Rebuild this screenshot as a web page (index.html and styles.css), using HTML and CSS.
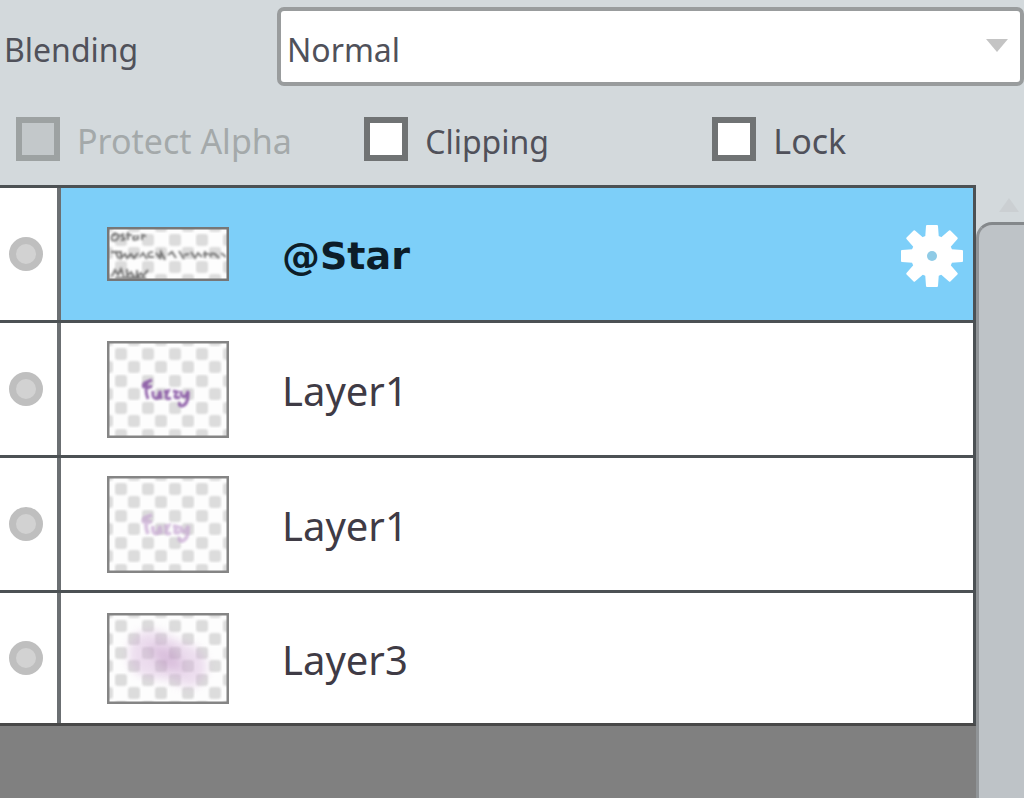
FILE: index.html
```html
<!DOCTYPE html>
<html lang="en">
<head>
<meta charset="utf-8">
<meta name="viewport" content="width=device-width, initial-scale=1">
<title>Layers</title>
<link rel="stylesheet" href="styles.css">
</head>
<body>
<svg class="defs" width="0" height="0" aria-hidden="true">
  <defs>
    <filter id="soft"><feGaussianBlur stdDeviation="1"/></filter>
    <filter id="cloud" x="-30%" y="-30%" width="160%" height="160%"><feGaussianBlur stdDeviation="5"/></filter>
    <pattern id="checker" width="27" height="27" patternUnits="userSpaceOnUse" x="7" y="6">
      <rect width="27" height="27" fill="#fdfdfd"/>
      <g fill="#dcdcdc" filter="url(#soft)">
        <rect x="1" y="1" width="12" height="12" rx="3"/>
        <rect x="14" y="14" width="12" height="12" rx="3"/>
      </g>
    </pattern>
  </defs>
</svg>
<main class="panel">
  <div class="blending">
    <label class="blending-label" for="mode">Blending</label>
    <div class="select-wrap">
      <select id="mode" class="select"><option>Normal</option></select>
      <svg class="select-arrow" viewBox="0 0 22 13" aria-hidden="true"><path d="M0 0H22L11 13Z" fill="#c4c4c4"/></svg>
    </div>
  </div>
  <div class="options">
    <label class="option option-wide option-off"><input class="box" type="checkbox" disabled><span class="option-text">Protect Alpha</span></label>
    <label class="option"><input class="box" type="checkbox"><span class="option-text">Clipping</span></label>
    <label class="option option-wide"><input class="box" type="checkbox"><span class="option-text">Lock</span></label>
  </div>
  <div class="body">
    <ul class="layers">
      <li class="layer">
        <button class="eye" aria-label="Toggle visibility"><span class="dot"></span></button>
        <div class="content selected">
          <svg class="thumb" viewBox="0 0 122 54" aria-hidden="true">
            <rect width="122" height="54" fill="url(#checker)"/>
            <g fill="none" stroke="#444" stroke-width="2" opacity=".7" filter="url(#soft)">
              <path d="M9 6Q3 8 5 13Q10 15 12 9Q10 5 6 9M17 7Q12 8 17 11Q19 13 14 13M21 5V13M19 8H25M29 9Q24 10 27 13L31 12V8M35 13V8L39 9"/>
              <path d="M4 25H13M8 24L12 32M14 24V31L18 27L20 31L24 27L27 31L31 26M33 30L36 26L40 32M46 25Q39 25 42 30L47 30M49 26L53 31L54 25L58 33M61 28L65 25L69 31M72 24L77 32M77 28L82 27M84 25L88 31L91 26L95 30M98 24V31M96 27H102M104 30Q102 25 108 27L112 31M114 26L119 30"/>
              <path d="M5 49L8 43L11 48L14 42L17 50M20 42V49L24 45L27 50M30 43V50L34 46L36 49L41 43M8 51H39"/>
            </g>
            <rect x="1" y="1" width="120" height="52" fill="none" stroke="#777" stroke-width="3"/>
          </svg>
          <span class="name name-bold">@Star</span>
          <button class="gear" aria-label="Layer settings">
            <svg class="gear-icon" viewBox="-31 -31 62 62" aria-hidden="true">
              <g fill="#fff" stroke="#fff" stroke-width="2" stroke-linejoin="round">
                <path id="tooth" d="M-5 -30H5L6 -16H-6Z"/>
                <use href="#tooth" transform="rotate(45)"/><use href="#tooth" transform="rotate(90)"/><use href="#tooth" transform="rotate(135)"/><use href="#tooth" transform="rotate(180)"/><use href="#tooth" transform="rotate(225)"/><use href="#tooth" transform="rotate(270)"/><use href="#tooth" transform="rotate(315)"/>
                <circle r="20"/>
              </g>
              <circle r="5" fill="#8fcbe6"/>
            </svg>
          </button>
        </div>
      </li>
      <li class="layer">
        <button class="eye" aria-label="Toggle visibility"><span class="dot"></span></button>
        <div class="content">
          <svg class="thumb" viewBox="0 0 122 97" aria-hidden="true">
            <rect width="122" height="97" fill="url(#checker)"/>
            <path d="M37 47Q35 42 40 41L45 39M41 40Q37 48 41 58M38 48L45 45M46 50Q45 59 51 57L53 50L54 58M57 51L61 50Q56 60 64 57M66 50L70 51Q65 59 73 56M74 50Q73 57 79 55L81 50Q82 63 75 65Q71 65 73 61" fill="none" stroke="#8551a2" stroke-width="3" opacity=".85" filter="url(#soft)"/>
            <rect x="1" y="1" width="120" height="95" fill="none" stroke="#858585" stroke-width="3"/>
          </svg>
          <span class="name">Layer1</span>
        </div>
      </li>
      <li class="layer">
        <button class="eye" aria-label="Toggle visibility"><span class="dot"></span></button>
        <div class="content">
          <svg class="thumb" viewBox="0 0 122 97" aria-hidden="true">
            <rect width="122" height="97" fill="url(#checker)"/>
            <path d="M37 47Q35 42 40 41L45 39M41 40Q37 48 41 58M38 48L45 45M46 50Q45 59 51 57L53 50L54 58M57 51L61 50Q56 60 64 57M66 50L70 51Q65 59 73 56M74 50Q73 57 79 55L81 50Q82 63 75 65Q71 65 73 61" fill="none" stroke="#c4a3d0" stroke-width="4" opacity=".65" filter="url(#soft)"/>
            <rect x="1" y="1" width="120" height="95" fill="none" stroke="#858585" stroke-width="3"/>
          </svg>
          <span class="name">Layer1</span>
        </div>
      </li>
      <li class="layer layer-last">
        <button class="eye" aria-label="Toggle visibility"><span class="dot"></span></button>
        <div class="content">
          <svg class="thumb" viewBox="0 0 122 91" aria-hidden="true">
            <rect width="122" height="91" fill="url(#checker)"/>
            <path d="M22 35Q24 16 50 18Q66 24 72 28Q96 34 98 46Q104 62 88 74Q72 74 60 66Q34 68 22 52Z" fill="#d3add8" opacity=".4" filter="url(#cloud)"/>
            <path d="M40 32L68 36L78 58L56 56Z" fill="#b080b5" opacity=".3" filter="url(#cloud)"/>
            <rect x="1" y="1" width="120" height="89" fill="none" stroke="#858585" stroke-width="3"/>
          </svg>
          <span class="name">Layer3</span>
        </div>
      </li>
    </ul>
    <div class="scroll">
      <svg class="scroll-up" viewBox="0 0 20 14" aria-hidden="true"><path d="M0 14L10 0L20 14Z" fill="#c8cccf"/></svg>
      <div class="scroll-thumb"></div>
    </div>
  </div>
</main>
</body>
</html>
```
FILE: styles.css
```css
* { box-sizing: border-box; }

body {
  margin: 0;
  background: #d3d9dc;
  color: #50515a;
  font-family: "Noto Sans", "Open Sans", sans-serif;
  font-size: 32px;
}

button { padding: 0; border: 0; background: none; }

.defs { position: absolute; }

.panel {
  display: flex;
  flex-direction: column;
  min-height: 100vh;
}

.blending {
  display: flex;
  align-items: center;
  padding: 7px 0 0 4px;
}

.blending-label { width: 273px; padding-top: 6px; }

.select-wrap {
  position: relative;
  flex: 1;
  height: 79px;
}

.select {
  width: 100%;
  height: 100%;
  padding: 6px 50px 0 6px;
  appearance: none;
  border: 4px solid #999c9d;
  border-radius: 7px;
  background: #fff;
  color: #50515a;
  font: inherit;
}

.select-arrow {
  position: absolute;
  top: 32px;
  right: 16px;
  width: 22px;
  height: 13px;
}

.options {
  display: grid;
  grid-template-columns: 34% 34% 1fr;
  height: 99px;
  padding: 31px 0 0 16px;
  margin-right: -16px;
}

.option {
  display: flex;
  align-items: center;
  gap: 17px;
  height: 44px;
  white-space: nowrap;
}

.option-text { padding-top: 4px; }
.option-wide { font-size: 34px; }
.option-off { color: #a4a9aa; }

.box {
  width: 44px;
  height: 44px;
  margin: 0;
  appearance: none;
  border: 6px solid #707374;
  background: #fff;
}

.box:checked { background: #707374; }
.box:disabled { border-color: #9da2a2; background: #c3c8ca; }

.body {
  display: flex;
  flex: 1;
}

.layers {
  flex: 1;
  margin: 0;
  padding: 0;
  list-style: none;
  background: #808080;
}

.layer {
  display: flex;
  height: 135px;
  border-top: 3px solid #4c5154;
  border-right: 3px solid #4c5154;
  background: #fff;
}

.layer-last {
  height: 136px;
  border-bottom: 3px solid #484848;
}

.eye {
  display: grid;
  width: 61px;
  padding-left: 9px;
  justify-content: start;
  align-content: center;
  border-right: 4px solid #6b6f72;
}

.dot {
  width: 34px;
  height: 34px;
  border: 7px solid #bfbfbf;
  border-radius: 50%;
  background: #d2d2d2;
}

.content {
  display: flex;
  flex: 1;
  align-items: center;
  padding: 0 10px 0 46px;
}

.selected { background: #7dcff9; }

.thumb { width: 122px; }

.name {
  flex: 1;
  padding: 2px 0 0 53px;
  color: #3f3b45;
  font-size: 40px;
}

.name-bold {
  padding-top: 4px;
  color: #0c1d28;
  font-family: "DejaVu Sans", sans-serif;
  font-size: 38px;
  font-weight: bold;
}

.gear { width: 62px; padding-top: 4px; }
.gear-icon { display: block; width: 100%; }

.scroll {
  display: flex;
  flex-direction: column;
  width: 48px;
}

.scroll-up {
  width: 20px;
  height: 14px;
  margin: 13px 0 10px 23px;
  opacity: 0.7;
}

.scroll-thumb {
  flex: 1;
  border-top: 3px solid #84888b;
  border-left: 3px solid #909497;
  border-top-left-radius: 16px;
  background: #bec3c7;
}
```
